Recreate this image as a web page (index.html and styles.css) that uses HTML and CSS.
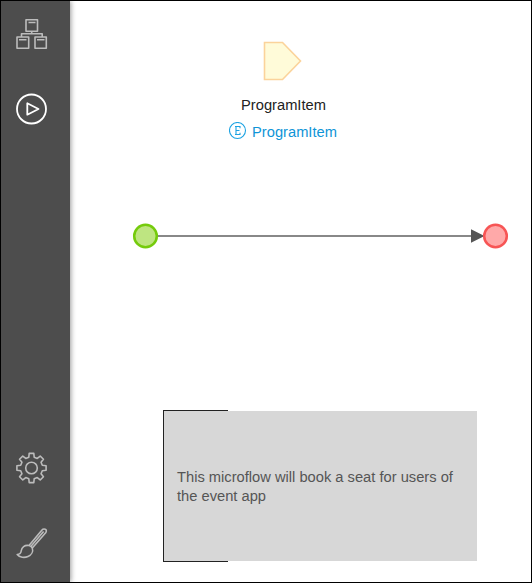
FILE: index.html
```html
<!DOCTYPE html>
<html lang="en">
<head>
<meta charset="utf-8">
<title>Microflow editor</title>
<link rel="stylesheet" href="styles.css">
</head>
<body>
<div class="app">
  <nav class="sidebar">
    <div class="group">
      <svg class="icon" viewBox="0 0 32 32"><path d="M10 1.700h11.500v11.600H10zM12.500 4.500h7M15.700 13.300v3M5.500 19v-3.200h20.700V19M1 19h11.700v11.300H1zM3 21.700h7.500M19 19h11.300v11.300H19zM21 21.700h7.500"/></svg>
      <svg class="icon active" viewBox="0 0 32 32"><circle cx="15.500" cy="16" r="14.500"/><path d="M11.300 10.300v11.400L22.500 16z"/></svg>
    </div>
    <div class="group">
      <svg class="icon" viewBox="-15.500 -16 32 32"><path d="M-2.700-10.800-2.300-14.600H2.300L2.700-10.800 5.730-9.550 8.700-11.950 11.950-8.700 9.550-5.730 10.800-2.700 14.600-2.300V2.300L10.800 2.700 9.550 5.730 11.950 8.700 8.700 11.950 5.730 9.550 2.700 10.800 2.300 14.600H-2.300L-2.700 10.800-5.730 9.550-8.700 11.950-11.950 8.700-9.550 5.730-10.800 2.700-14.600 2.300V-2.300L-10.800-2.700-9.550-5.730-11.950-8.700-8.700-11.950-5.730-9.550z"/><circle r="5.800"/></svg>
      <svg class="icon" viewBox="0 0 32 32"><path d="M13 18.500 25.800 3.200C27.500 1.200 31.700 1.800 29.900 5.500L16.300 21M13 18.500C8.500 17.600 5.700 20.500 5.300 23.500 5 26 3.200 27.400 1.200 27.600 3.500 30.500 8.500 31 12 29.500 15.500 28 17.400 24.500 16.300 21 15.600 19.700 14.500 18.900 13 18.500zM14.800 19.500 27.600 4.500"/></svg>
    </div>
  </nav>
  <main class="canvas">
    <div class="node parameter">
      <svg class="shape" viewBox="0 0 40 40"><path d="M1.500 1.500H19.500L37.500 20 19.500 38.500h-18z"/></svg>
      <div class="name">ProgramItem</div>
      <div class="type">
        <svg class="entity" viewBox="0 0 18 18"><circle cx="8.500" cy="8.500" r="8"/><path d="M6 4.500h5v1.800M6 12.500h5v-1.800M7 4.500v8M7 8.500h3.500"/></svg>
        <span>ProgramItem</span>
      </div>
    </div>
    <svg class="node flow" viewBox="0 0 378 28">
      <path class="line" d="M26 14H340"/>
      <path class="arrow" d="M339 7.300 352.500 14 339 20.700z"/>
      <circle class="start" cx="13.500" cy="14" r="11.300"/>
      <circle class="end" cx="363.500" cy="14" r="11.300"/>
    </svg>
    <div class="node note">This microflow will book a seat for users of the event app</div>
  </main>
</div>
</body>
</html>
```
FILE: styles.css
```css
*, *::before { box-sizing: border-box; }
body {
  margin: 0;
  font-family: "Liberation Sans", Arial, sans-serif;
  font-size: 14.7px;
}
.app {
  display: flex;
  width: 532px;
  height: 583px;
  border: 1px solid #000;
  background: #fff;
  overflow: hidden;
}
.sidebar {
  display: flex;
  flex-direction: column;
  justify-content: space-between;
  flex: 0 0 69px;
  padding: 17px 0 23px 15px;
  background: #4d4d4d;
  box-shadow: 1px 0 5px rgba(0, 0, 0, 0.4);
}
.group {
  display: flex;
  flex-direction: column;
  gap: 43px;
}
.icon {
  display: block;
  width: 32px;
  height: 32px;
  fill: none;
  stroke: #bcbcbc;
  stroke-width: 1.6;
  stroke-linejoin: round;
}
.icon.active {
  stroke: #fff;
  stroke-width: 1.8;
}
.canvas {
  position: relative;
  flex: 1;
}
.node { position: absolute; }
.parameter {
  left: 153px;
  top: 40px;
  width: 121px;
  display: flex;
  flex-direction: column;
  align-items: center;
}
.shape {
  width: 40px;
  height: 40px;
  margin-left: -1px;
  fill: #fffbd9;
  stroke: #fbd39b;
  stroke-width: 1.6;
}
.name {
  margin-top: 15px;
  line-height: 18px;
  color: #222;
}
.type {
  display: flex;
  align-items: center;
  gap: 5px;
  margin: 8px 0 0 -1px;
  line-height: 20px;
  color: #0f95d7;
}
.entity {
  width: 18px;
  height: 18px;
  margin-bottom: 2px;
  fill: none;
  stroke: #1da3e2;
  stroke-width: 1.1;
}
.flow {
  left: 62px;
  top: 221px;
  width: 378px;
  height: 28px;
}
.line { stroke: #888; stroke-width: 2; }
.arrow { fill: #555; }
.start { fill: #bee581; stroke: #75cb0c; stroke-width: 2.5; }
.end { fill: #ffa9a9; stroke: #f75555; stroke-width: 2.5; }
.note {
  left: 94px;
  top: 410px;
  width: 313px;
  height: 150px;
  padding: 57px 12px 0 13px;
  background: #d7d7d7;
  color: #555;
  line-height: 19px;
}
.note::before {
  content: "";
  position: absolute;
  left: -1px;
  top: -1px;
  width: 65px;
  height: 152px;
  border: 1px solid #222;
  border-right: 0;
}
```
